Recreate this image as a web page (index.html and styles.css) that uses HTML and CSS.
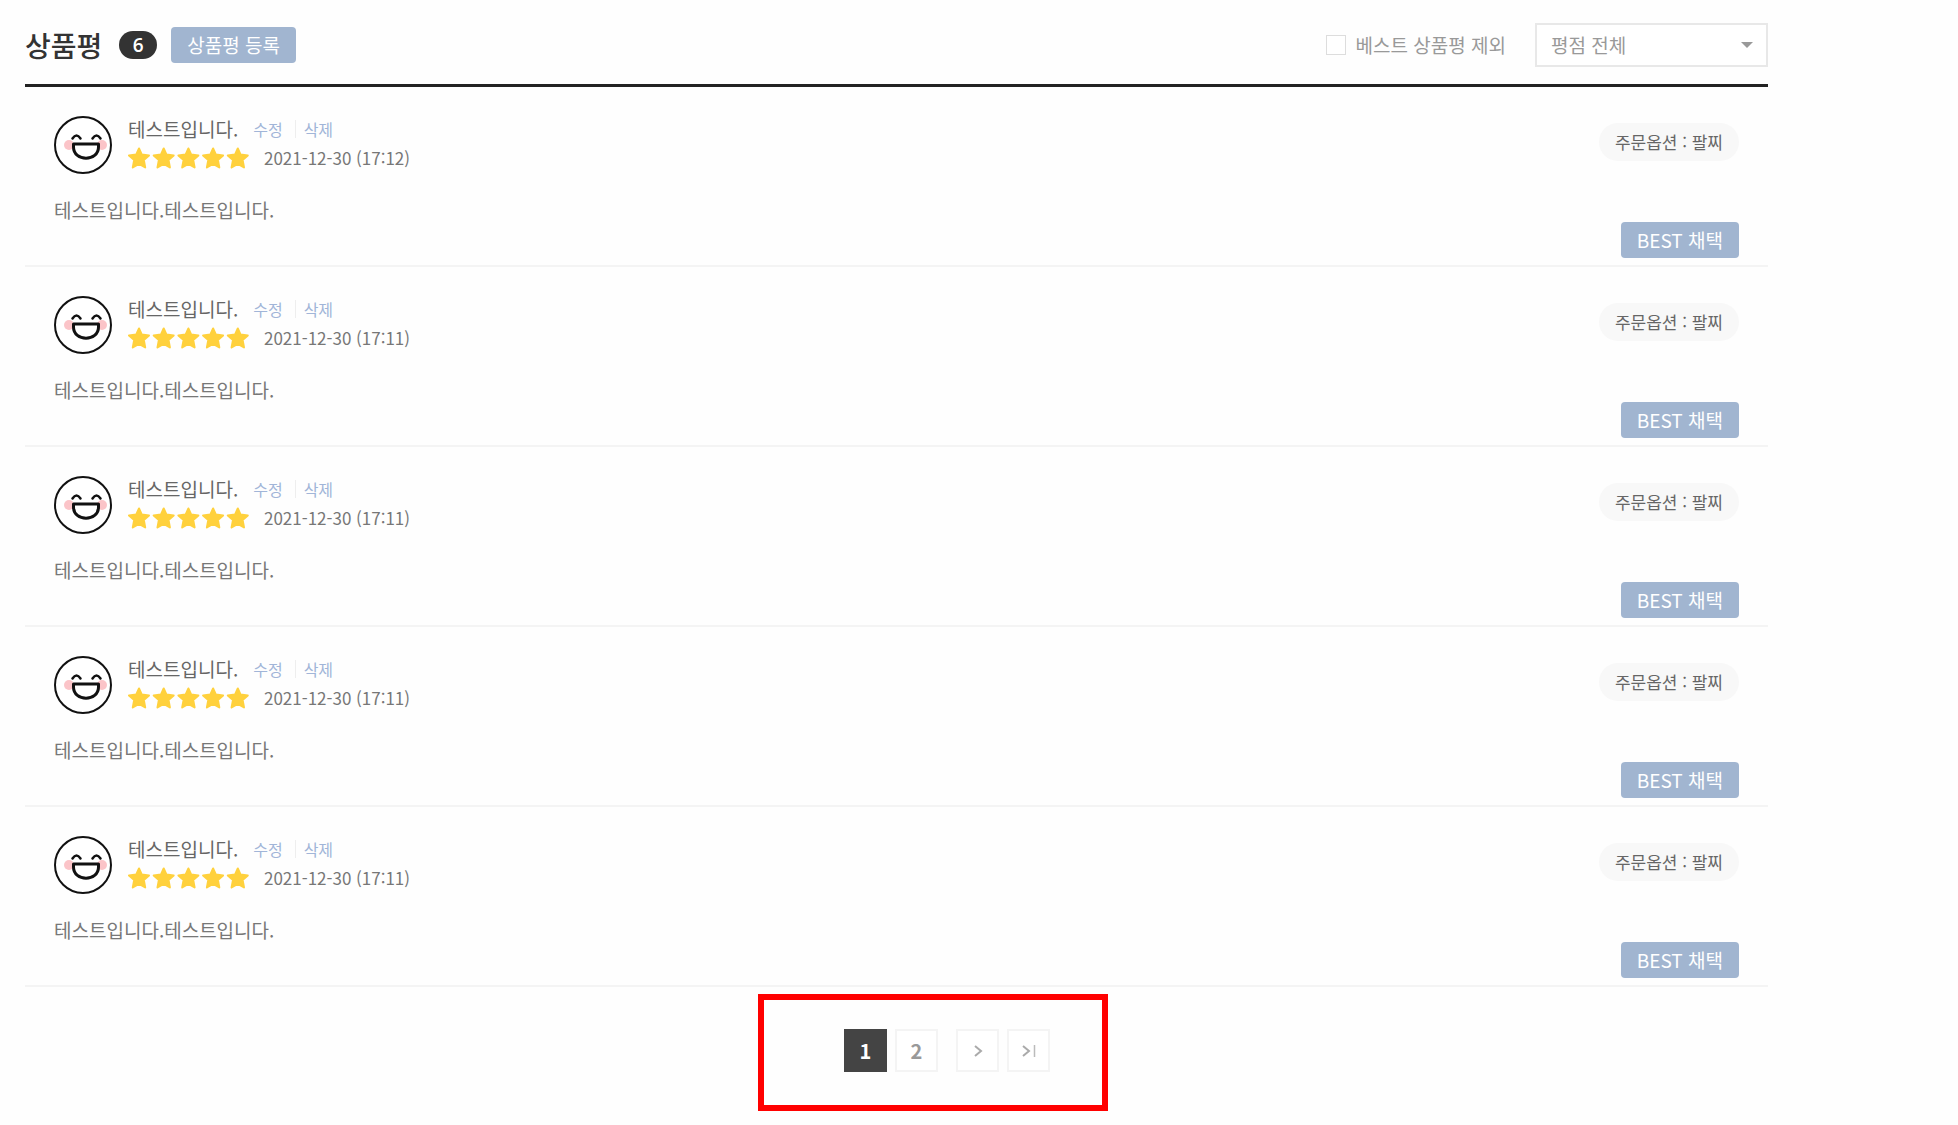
FILE: index.html
```html
<!DOCTYPE html>
<html lang="ko">
<head>
<meta charset="utf-8">
<meta name="viewport" content="width=device-width, initial-scale=1">
<title>상품평</title>
<link rel="stylesheet" href="styles.css">
</head>
<body>
<svg class="defs" aria-hidden="true">
  <symbol id="face" viewBox="0 0 58 58">
    <circle cx="29" cy="29" r="28" fill="#fff" stroke="#111" stroke-width="2"/>
    <circle cx="15" cy="29" r="5" fill="#fbc4c8"/>
    <circle cx="48" cy="29" r="5" fill="#fbc4c8"/>
    <path d="M18.500 22.500Q22.500 16.500 26.500 22.500M38.500 22.500Q42.500 16.500 46.500 22.500" fill="none" stroke="#111" stroke-width="2.500" stroke-linecap="round"/>
    <path d="M19.500 28H44.500V31C44.500 46 19.500 46 19.500 31Z" fill="#fff" stroke="#111" stroke-width="3" stroke-linejoin="round"/>
  </symbol>
  <symbol id="stars" viewBox="0 0 122 22">
    <g fill="#ffd13d" stroke="#ffd13d" stroke-width="2" stroke-linejoin="round">
      <path id="star" d="M11 1.500L13.800 7.600L21 8.400L15.800 13L17.200 20.500L11 17L4.800 20.500L6.200 13L1 8.400L8.200 7.600Z"/>
      <use href="#star" x="24.700"/><use href="#star" x="49.400"/><use href="#star" x="74.100"/><use href="#star" x="98.800"/>
    </g>
  </symbol>
</svg>
<main class="reviews">
  <header class="head">
    <h1 class="title">상품평</h1>
    <span class="count">6</span>
    <button class="btn" type="button">상품평 등록</button>
    <label class="exclude"><input class="check" type="checkbox">베스트 상품평 제외</label>
    <div class="select-wrap">
      <select class="select" aria-label="평점"><option>평점 전체</option></select>
      <svg class="arrow" viewBox="0 0 12 6" aria-hidden="true"><path d="M0 0H12L6 6Z" fill="#999"/></svg>
    </div>
  </header>
  <ul class="list">
    <li class="review">
      <div class="content">
        <div class="profile">
          <svg class="face" aria-hidden="true"><use href="#face"/></svg>
          <div class="meta">
            <div class="line"><strong class="name">테스트입니다.</strong><a class="action" href="#">수정</a><a class="action remove" href="#">삭제</a></div>
            <div class="line"><svg class="stars" role="img" aria-label="별점 5점"><use href="#stars"/></svg><time class="date">2021-12-30 (17:12)</time></div>
          </div>
        </div>
        <p class="text">테스트입니다.테스트입니다.</p>
      </div>
      <div class="side"><span class="option">주문옵션 : 팔찌</span><button class="btn" type="button">BEST 채택</button></div>
    </li>
    <li class="review">
      <div class="content">
        <div class="profile">
          <svg class="face" aria-hidden="true"><use href="#face"/></svg>
          <div class="meta">
            <div class="line"><strong class="name">테스트입니다.</strong><a class="action" href="#">수정</a><a class="action remove" href="#">삭제</a></div>
            <div class="line"><svg class="stars" role="img" aria-label="별점 5점"><use href="#stars"/></svg><time class="date">2021-12-30 (17:11)</time></div>
          </div>
        </div>
        <p class="text">테스트입니다.테스트입니다.</p>
      </div>
      <div class="side"><span class="option">주문옵션 : 팔찌</span><button class="btn" type="button">BEST 채택</button></div>
    </li>
    <li class="review">
      <div class="content">
        <div class="profile">
          <svg class="face" aria-hidden="true"><use href="#face"/></svg>
          <div class="meta">
            <div class="line"><strong class="name">테스트입니다.</strong><a class="action" href="#">수정</a><a class="action remove" href="#">삭제</a></div>
            <div class="line"><svg class="stars" role="img" aria-label="별점 5점"><use href="#stars"/></svg><time class="date">2021-12-30 (17:11)</time></div>
          </div>
        </div>
        <p class="text">테스트입니다.테스트입니다.</p>
      </div>
      <div class="side"><span class="option">주문옵션 : 팔찌</span><button class="btn" type="button">BEST 채택</button></div>
    </li>
    <li class="review">
      <div class="content">
        <div class="profile">
          <svg class="face" aria-hidden="true"><use href="#face"/></svg>
          <div class="meta">
            <div class="line"><strong class="name">테스트입니다.</strong><a class="action" href="#">수정</a><a class="action remove" href="#">삭제</a></div>
            <div class="line"><svg class="stars" role="img" aria-label="별점 5점"><use href="#stars"/></svg><time class="date">2021-12-30 (17:11)</time></div>
          </div>
        </div>
        <p class="text">테스트입니다.테스트입니다.</p>
      </div>
      <div class="side"><span class="option">주문옵션 : 팔찌</span><button class="btn" type="button">BEST 채택</button></div>
    </li>
    <li class="review">
      <div class="content">
        <div class="profile">
          <svg class="face" aria-hidden="true"><use href="#face"/></svg>
          <div class="meta">
            <div class="line"><strong class="name">테스트입니다.</strong><a class="action" href="#">수정</a><a class="action remove" href="#">삭제</a></div>
            <div class="line"><svg class="stars" role="img" aria-label="별점 5점"><use href="#stars"/></svg><time class="date">2021-12-30 (17:11)</time></div>
          </div>
        </div>
        <p class="text">테스트입니다.테스트입니다.</p>
      </div>
      <div class="side"><span class="option">주문옵션 : 팔찌</span><button class="btn" type="button">BEST 채택</button></div>
    </li>
  </ul>
  <div class="paging-area">
    <nav class="paging" aria-label="페이지">
      <a class="page current" href="#" aria-current="page">1</a>
      <a class="page" href="#">2</a>
      <a class="page next" href="#" aria-label="다음"><svg width="16" height="16" viewBox="0 0 16 16"><path d="M5 3L11 8L5 13" fill="none" stroke="#aaa" stroke-width="2"/></svg></a>
      <a class="page" href="#" aria-label="마지막"><svg width="16" height="16" viewBox="0 0 16 16"><path d="M2 3L8 8L2 13" fill="none" stroke="#aaa" stroke-width="2"/><path d="M13.500 2V14" stroke="#bbb" stroke-width="1.500"/></svg></a>
    </nav>
  </div>
</main>
</body>
</html>
```
FILE: styles.css
```css
* { box-sizing: border-box; }
body {
  margin: 0;
  background: #fefefe;
  color: #666;
  font-family: "Noto Sans CJK KR", sans-serif;
  font-size: 19px;
  line-height: 28px;
}
button, input, select { font: inherit; }
a { text-decoration: none; }
.defs { position: absolute; width: 0; height: 0; }
.reviews { padding: 0 190px 0 25px; }

.head {
  display: flex;
  align-items: center;
  height: 87px;
  padding-top: 5px;
  border-bottom: 3px solid #222;
}
.title { margin: 0; color: #333; font-size: 28px; font-weight: 500; }
.count {
  width: 38px;
  margin: 0 14px 0 17px;
  border-radius: 14px;
  background: #333;
  color: #fff;
  font-family: "Open Sans", sans-serif;
  font-size: 19px;
  font-weight: 600;
  text-align: center;
}
.btn {
  height: 36px;
  padding: 0 16px;
  border: 0;
  border-radius: 4px;
  background: #a1b5d0;
  color: #fff;
  font-size: 19px;
  line-height: 34px;
  font-weight: 400;
  white-space: nowrap;
}
.exclude {
  display: flex;
  align-items: center;
  gap: 10px;
  margin-left: auto;
  color: #999;
}
.check {
  appearance: none;
  width: 20px;
  height: 20px;
  margin: 0;
  border: 1px solid #ddd;
  background: #fff;
}
.select-wrap { position: relative; width: 233px; margin-left: 29px; }
.select {
  display: block;
  appearance: none;
  width: 100%;
  height: 44px;
  padding: 0 14px;
  border: 2px solid #e8e8e8;
  border-radius: 0;
  background: #fff;
  color: #999;
}
.arrow {
  position: absolute;
  top: 19px;
  right: 15px;
  width: 12px;
  height: 6px;
  pointer-events: none;
}

.list { margin: 0; padding: 0; list-style: none; }
.review {
  display: flex;
  justify-content: space-between;
  height: 180px;
  padding: 29px 29px 7px;
  border-bottom: 2px solid #f4f4f4;
}
.profile { display: flex; gap: 16px; height: 58px; }
.face { width: 58px; height: 58px; }
.meta { margin-top: -2px; }
.line { display: flex; align-items: center; height: 29px; }
.name { font-weight: 400; }
.action { margin-left: 15px; color: #a1b5d8; font-size: 16px; font-weight: 400; }
.remove { display: flex; align-items: center; margin-left: 12px; }
.remove::before {
  content: "";
  width: 1px;
  height: 18px;
  margin-right: 8px;
  background: #eee;
}
.stars { width: 122px; height: 22px; }
.date { margin-left: 14px; color: #777; font-size: 17px; }
.text { margin: 22px 0 0; color: #777; }
.side {
  display: flex;
  flex-direction: column;
  align-items: flex-end;
  justify-content: space-between;
  padding-top: 7px;
}
.option {
  padding: 0 16px;
  border-radius: 19px;
  background: #f8f8f8;
  font-size: 17px;
  line-height: 38px;
}

.paging-area { display: flex; justify-content: center; padding: 7px 0 14px 73px; }
.paging {
  display: flex;
  gap: 8px;
  width: 350px;
  height: 117px;
  padding: 29px 0 0 80px;
  border: 6px solid #f00;
}
.page {
  display: flex;
  align-items: center;
  justify-content: center;
  width: 43px;
  height: 43px;
  border: 2px solid #f4f4f4;
  background: #fff;
  color: #999;
  font-size: 20px;
  font-weight: 700;
}
.current { border-color: #444; background: #444; color: #fff; }
.next { margin-left: 10px; }
```
